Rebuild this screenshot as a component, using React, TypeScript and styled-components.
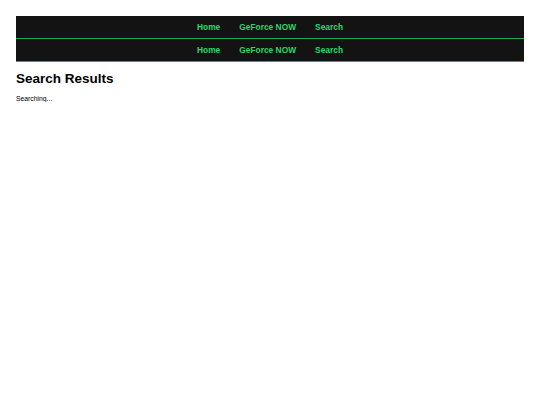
import styled, { createGlobalStyle } from "styled-components";

const GlobalStyle = createGlobalStyle`
  body {
    margin: 16px;
    background: #ffffff;
    font-family: "Liberation Sans", Arial, sans-serif;
    color: #000000;
  }
`;

const NavBar = styled.nav`
  display: flex;
  justify-content: center;
  align-items: center;
  gap: 19px;
  height: 22px;
  background-color: #131313;
  border-bottom: 1px solid #1fa85a;
`;

const NavLink = styled.a`
  color: #27d86c;
  font-size: 8.4px;
  font-weight: bold;
  text-decoration: none;
  cursor: pointer;
`;

const Title = styled.h1`
  font-size: 13.5px;
  font-weight: bold;
  margin: 9px 0 9px;
`;

const Status = styled.p`
  font-size: 6.8px;
  margin: 0;
`;

const links = ["Home", "GeForce NOW", "Search"];

function Nav() {
  return (
    <NavBar>
      {links.map((l) => (
        <NavLink key={l}>{l}</NavLink>
      ))}
    </NavBar>
  );
}

export default function App() {
  return (
    <>
      <GlobalStyle />
      <Nav />
      <Nav />
      <Title>Search Results</Title>
      <Status>Searching...</Status>
    </>
  );
}
